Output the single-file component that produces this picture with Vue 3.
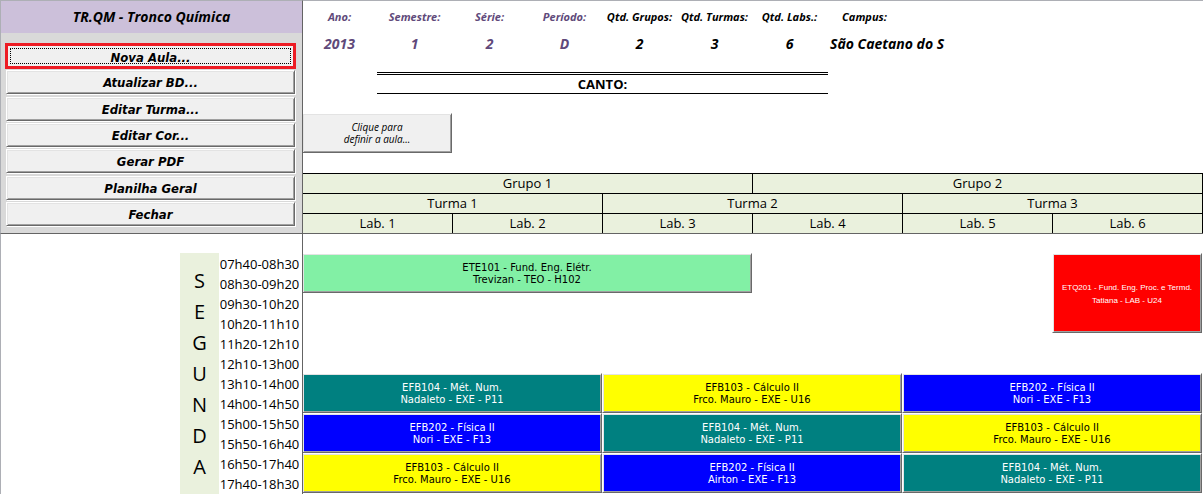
<script setup>
const actions = [
  'Nova Aula...',
  'Atualizar BD...',
  'Editar Turma...',
  'Editar Cor...',
  'Gerar PDF',
  'Planilha Geral',
  'Fechar',
]

const info = [
  { label: 'Ano:', value: '2013', tone: 'key' },
  { label: 'Semestre:', value: '1', tone: 'key' },
  { label: 'Série:', value: '2', tone: 'key' },
  { label: 'Período:', value: 'D', tone: 'key' },
  { label: 'Qtd. Grupos:', value: '2', tone: 'plain' },
  { label: 'Qtd. Turmas:', value: '3', tone: 'plain' },
  { label: 'Qtd. Labs.:', value: '6', tone: 'plain' },
  { label: 'Campus:', value: 'São Caetano do S', tone: 'campus' },
]

const groups = ['Grupo 1', 'Grupo 2']
const classes = ['Turma 1', 'Turma 2', 'Turma 3']
const labs = ['Lab. 1', 'Lab. 2', 'Lab. 3', 'Lab. 4', 'Lab. 5', 'Lab. 6']

const day = 'SEGUNDA'.split('')
const times = [
  '07h40-08h30', '08h30-09h20', '09h30-10h20', '10h20-11h10',
  '11h20-12h10', '12h10-13h00', '13h10-14h00', '14h00-14h50',
  '15h00-15h50', '15h50-16h40', '16h50-17h40', '17h40-18h30',
]

const lessons = [
  { row: 1, rows: 2, col: 1, cols: 3, color: 'green', title: 'ETE101 - Fund. Eng. Elétr.', detail: 'Trevizan - TEO - H102' },
  { row: 1, rows: 4, col: 6, cols: 1, color: 'red', title: 'ETQ201 - Fund. Eng. Proc. e Termd.', detail: 'Tatiana - LAB - U24' },
  { row: 7, rows: 2, col: 1, cols: 2, color: 'teal', title: 'EFB104 - Mét. Num.', detail: 'Nadaleto - EXE - P11' },
  { row: 7, rows: 2, col: 3, cols: 2, color: 'yellow', title: 'EFB103 - Cálculo II', detail: 'Frco. Mauro - EXE - U16' },
  { row: 7, rows: 2, col: 5, cols: 2, color: 'blue', title: 'EFB202 - Física II', detail: 'Nori - EXE - F13' },
  { row: 9, rows: 2, col: 1, cols: 2, color: 'blue', title: 'EFB202 - Física II', detail: 'Nori - EXE - F13' },
  { row: 9, rows: 2, col: 3, cols: 2, color: 'teal', title: 'EFB104 - Mét. Num.', detail: 'Nadaleto - EXE - P11' },
  { row: 9, rows: 2, col: 5, cols: 2, color: 'yellow', title: 'EFB103 - Cálculo II', detail: 'Frco. Mauro - EXE - U16' },
  { row: 11, rows: 2, col: 1, cols: 2, color: 'yellow', title: 'EFB103 - Cálculo II', detail: 'Frco. Mauro - EXE - U16' },
  { row: 11, rows: 2, col: 3, cols: 2, color: 'blue', title: 'EFB202 - Física II', detail: 'Airton - EXE - F13' },
  { row: 11, rows: 2, col: 5, cols: 2, color: 'teal', title: 'EFB104 - Mét. Num.', detail: 'Nadaleto - EXE - P11' },
]

const place = (l) => ({
  gridRow: `${l.row} / span ${l.rows}`,
  gridColumn: `${l.col} / span ${l.cols}`,
})
</script>

<template>
  <div class="sheet">
    <aside class="panel">
      <h1 class="title">TR.QM - Tronco Química</h1>
      <nav class="actions">
        <button
          v-for="(name, i) in actions"
          :key="name"
          type="button"
          class="bevel action"
          :class="{ active: i === 0 }"
        ><span>{{ name }}</span></button>
      </nav>
    </aside>

    <header class="head">
      <dl class="info">
        <div v-for="item in info" :key="item.label" class="fact" :class="item.tone">
          <dt>{{ item.label }}</dt>
          <dd>{{ item.value }}</dd>
        </div>
      </dl>
      <div class="corner-row">
        <div class="corner">CANTO:</div>
      </div>
      <div class="define-row">
        <button type="button" class="bevel define">Clique para<br>definir a aula...</button>
      </div>
      <table class="labs">
        <thead>
          <tr><th v-for="g in groups" :key="g" colspan="6">{{ g }}</th></tr>
          <tr><th v-for="c in classes" :key="c" colspan="4">{{ c }}</th></tr>
          <tr><th v-for="l in labs" :key="l" colspan="2">{{ l }}</th></tr>
        </thead>
      </table>
    </header>

    <section class="rail">
      <div class="day"><span v-for="(c, i) in day" :key="i">{{ c }}</span></div>
      <ol class="times"><li v-for="t in times" :key="t">{{ t }}</li></ol>
    </section>

    <main class="board">
      <button
        v-for="(l, i) in lessons"
        :key="i"
        type="button"
        class="bevel lesson"
        :class="l.color"
        :style="place(l)"
      >{{ l.title }}<br>{{ l.detail }}</button>
    </main>
  </div>
</template>

<style>
body {
  margin: 0;
  background: #fff;
}
</style>

<style scoped>
.sheet {
  box-sizing: border-box;
  min-height: 100vh;
  display: grid;
  grid-template-columns: 303px minmax(0, 1fr);
  grid-template-rows: auto 1fr;
  font-family: "Open Sans", "Noto Sans", sans-serif;
  font-size: 13px;
  line-height: 20px;
  color: #000;
  background: #fff;
  overflow: hidden;
}

.bevel {
  box-sizing: border-box;
  margin: 0;
  padding: 0;
  border: 1px solid;
  border-color: #fff #696969 #696969 #fff;
  border-radius: 0;
  background: #f0f0f0;
  box-shadow: inset 1px 1px 0 #e3e3e3, inset -1px -1px 0 #a0a0a0;
  color: #000;
}

.panel {
  box-sizing: border-box;
  position: relative;
  z-index: 1;
  display: flex;
  flex-direction: column;
  border: solid;
  border-width: 1px;
  border-color: #adafb5 #646464 #646464 #adafb5;
  background: #d9d9d9;
}

.title {
  margin: 0;
  height: 32px;
  line-height: 32px;
  background: #ccc0da;
  text-align: center;
  font-size: 14px;
  font-weight: 700;
  font-style: italic;
}

.actions {
  flex: 1;
  display: flex;
  flex-direction: column;
  justify-content: space-between;
  padding: 11px 7px 7px 5px;
}

.action {
  height: 24px;
  padding-top: 2px;
  font: italic bold 13px/20px "DejaVu Sans Condensed", "DejaVu Sans", sans-serif;
  font-stretch: condensed;
  box-shadow: inset 1px 1px 0 #e3e3e3, inset -1px -1px 0 #a0a0a0, 1px 1px 0 #fff;
}

.action.active {
  border: 0;
  padding: 4px;
  box-shadow: none;
  outline: 3px solid #ed1c24;
  outline-offset: -2px;
}

.action.active span {
  box-sizing: border-box;
  display: block;
  height: 16px;
  border: 1px dotted #000;
  line-height: 18px;
}

.head {
  margin-left: -1px;
  border-top: 1px solid #adafb5;
}

.info {
  display: grid;
  grid-template-columns: repeat(12, minmax(0, 1fr));
  margin: 0;
  padding: 6px 1px 0 0;
  height: 65px;
  box-sizing: border-box;
}

.fact {
  text-align: center;
  white-space: nowrap;
  font-weight: 700;
  font-style: italic;
}

.fact dt {
  font-size: 11px;
}

.fact dd {
  margin: 4px 0 0;
  font-size: 14px;
  line-height: 26px;
}

.key {
  color: #60497a;
}

.campus dd {
  padding-left: 3px;
  text-align: left;
}

.corner-row,
.define-row {
  display: grid;
  grid-template-columns: repeat(12, minmax(0, 1fr));
  padding-right: 1px;
}

.corner {
  grid-column: 2 / span 6;
  margin: 6px -1px 0 0;
  border-top: 3px double #000;
  border-bottom: 1px solid #000;
  line-height: 18px;
  text-align: center;
  font-weight: 700;
}

.define {
  grid-column: 1 / span 2;
  height: 40px;
  margin: 19px 0 20px;
  font: italic 10px/12px "Open Sans", sans-serif;
}

.labs {
  width: 100%;
  table-layout: fixed;
  border-collapse: collapse;
}

.labs th {
  box-sizing: border-box;
  height: 20px;
  padding: 0;
  border: 1px solid #000;
  background: #eaf1dd;
  font-weight: 400;
  line-height: 19px;
}

.labs tr:last-child th {
  border-bottom-color: #646464;
}

.rail {
  position: relative;
  z-index: 1;
  display: flex;
  justify-content: flex-end;
  border-left: 1px solid #adafb5;
  border-right: 1px solid #646464;
  padding-top: 19px;
}

.day {
  width: 39px;
  padding-top: 12px;
  display: flex;
  flex-direction: column;
  background: #eaf1dd;
  text-align: center;
  font-size: 20px;
  line-height: 31px;
}

.times {
  box-sizing: border-box;
  width: 83px;
  margin: 0;
  padding: 1px 2px 0 0;
  list-style: none;
  text-align: center;
  white-space: nowrap;
}

.times li {
  height: 20px;
}

.board {
  display: grid;
  grid-template-columns: repeat(6, minmax(0, 1fr));
  grid-template-rows: repeat(12, 20px);
  margin-left: -1px;
  padding: 19px 1px 0 0;
}

.lesson {
  padding-top: 2px;
  font: 10px/12px "DejaVu Sans", sans-serif;
}

.green {
  background: #82f0a5;
}

.teal {
  background: #008080;
  color: #fff;
}

.yellow {
  background: #ff0;
}

.blue {
  background: #00f;
  color: #fff;
}

.red {
  background: #f00;
  color: #fff;
  font: 8px/13px "Liberation Sans", sans-serif;
}
</style>
